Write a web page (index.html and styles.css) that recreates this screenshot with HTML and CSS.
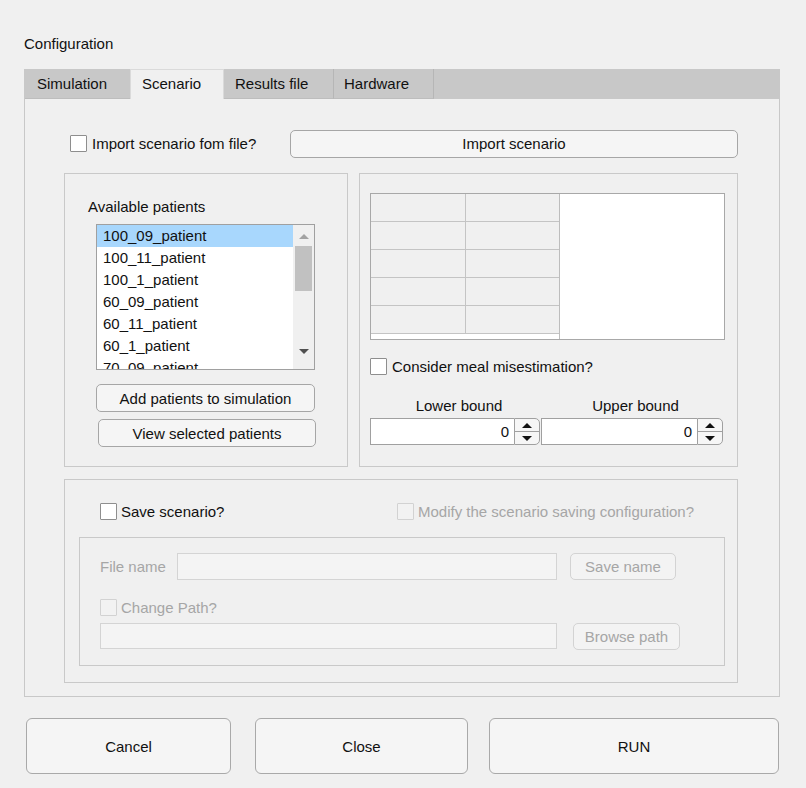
FILE: index.html
```html
<!DOCTYPE html>
<html>
<head>
<meta charset="utf-8">
<link rel="stylesheet" href="styles.css">
</head>
<body>
<div class="title">Configuration</div>
<div class="tabgroup">
  <div class="tabstrip">
    <div class="tab t1">Simulation</div>
    <div class="tab sel t2">Scenario</div>
    <div class="tab t3">Results file</div>
    <div class="tab t4">Hardware</div>
  </div>
  <div class="tabbody">
    <div class="import-row">
      <div class="check import-check"><span class="box"></span><span>Import scenario fom file?</span></div>
      <div class="btn import-btn">Import scenario</div>
    </div>
    <div class="mid-row">
      <div class="panel patients">
        <div class="lbl">Available patients</div>
        <div class="list">
          <div class="items">
            <div class="item selected">100_09_patient</div>
            <div class="item">100_11_patient</div>
            <div class="item">100_1_patient</div>
            <div class="item">60_09_patient</div>
            <div class="item">60_11_patient</div>
            <div class="item">60_1_patient</div>
            <div class="item">70_09_patient</div>
          </div>
          <div class="scroll">
            <div class="arr-up"></div>
            <div class="thumb"></div>
            <div class="arr-down"></div>
          </div>
        </div>
        <div class="btn add-btn">Add patients to simulation</div>
        <div class="btn view-btn">View selected patients</div>
      </div>
      <div class="panel meals">
        <div class="table">
          <div class="grid">
            <div class="cell"></div><div class="cell c2"></div>
            <div class="cell"></div><div class="cell c2"></div>
            <div class="cell"></div><div class="cell c2"></div>
            <div class="cell"></div><div class="cell c2"></div>
            <div class="cell"></div><div class="cell c2"></div>
          </div>
        </div>
        <div class="check consider-check"><span class="box"></span><span>Consider meal misestimation?</span></div>
        <div class="bound-labels">
          <div class="bl lower">Lower bound</div>
          <div class="bl upper">Upper bound</div>
        </div>
        <div class="spinners">
          <div class="spinner lower">
            <div class="spin-input">0</div>
            <div class="spin-arrows"><div class="sa"><span class="up"></span></div><div class="sa sa2"><span class="down"></span></div></div>
          </div>
          <div class="spinner upper">
            <div class="spin-input">0</div>
            <div class="spin-arrows"><div class="sa"><span class="up"></span></div><div class="sa sa2"><span class="down"></span></div></div>
          </div>
        </div>
      </div>
    </div>
    <div class="panel save-panel">
      <div class="save-row">
        <div class="check save-check"><span class="box"></span><span>Save scenario?</span></div>
        <div class="check disabled"><span class="box"></span><span>Modify the scenario saving configuration?</span></div>
      </div>
      <div class="panel inner">
        <div class="file-row">
          <div class="fn-label">File name</div>
          <div class="field fn-field"></div>
          <div class="btn dis save-name">Save name</div>
        </div>
        <div class="check disabled path-check"><span class="box"></span><span>Change Path?</span></div>
        <div class="path-row">
          <div class="field path-field"></div>
          <div class="btn dis browse">Browse path</div>
        </div>
      </div>
    </div>
  </div>
</div>
<div class="actions">
  <div class="btn big cancel">Cancel</div>
  <div class="btn big close">Close</div>
  <div class="btn big run">RUN</div>
</div>
</body>
</html>
```

FILE: styles.css
```css
* { box-sizing: border-box; }
html, body { margin: 0; padding: 0; }
body {
  background: #f0f0f0;
  font-family: "Liberation Sans", Arial, sans-serif;
  font-size: 15px;
  line-height: 17px;
  color: #111;
  width: 806px;
  height: 788px;
  overflow: hidden;
}
.title {
  height: 69px;
  padding: 35px 0 0 24px;
}
.tabgroup {
  margin-left: 24px;
  width: 756px;
  border: 1px solid #c8c8c8;
  border-top: none;
}
.tabstrip {
  display: flex;
  height: 30px;
  background: #c8c8c8;
}
.tab {
  height: 30px;
  padding: 6px 0 0 11px;
  border-right: 1px solid #b6b6b6;
  border-bottom: 1px solid #bdbdbd;
}
.t1 { width: 105px; padding-left: 12px; border-right: none; }
.t2 { width: 94px; }
.t3 { width: 110px; }
.t4 { width: 100px; padding-left: 10px; }
.tab.sel {
  background: #f0f0f0;
  border: 1px solid #dadada;
  border-bottom: none;
  padding-left: 11px;
  padding-top: 5px;
}
.tabbody {
  height: 597px;
  padding-left: 39px;
  padding-top: 31px;
}
.check {
  display: flex;
  align-items: center;
  height: 17px;
}
.box {
  width: 17px;
  height: 17px;
  border: 1px solid #8e8e8e;
  border-radius: 1px;
  background: #fff;
  margin-right: 5px;
  flex: none;
}
.check.disabled { color: #a6a6a6; }
.check.disabled .box { border-color: #d2d2d2; background: #f2f2f2; margin-right: 4px; }
.btn {
  display: flex;
  align-items: center;
  justify-content: center;
  background: #f5f5f5;
  border: 1px solid #a6a6a6;
  border-radius: 5px;
}
.btn.dis { color: #a6a6a6; border-color: #d3d3d3; background: #f3f3f3; }
.import-row {
  display: flex;
  align-items: center;
  height: 27px;
}
.import-check { width: 226px; padding-left: 6px; }
.import-btn { width: 448px; height: 28px; }
.mid-row {
  display: flex;
  gap: 11px;
  margin-top: 16px;
  height: 294px;
}
.panel { border: 1px solid #c9c9c9; }
.patients { width: 284px; height: 294px; padding: 24px 0 0 23px; }
.list {
  margin-top: 9px;
  margin-left: 8px;
  width: 219px;
  height: 146px;
  border: 1px solid #a0a0a0;
  background: #fff;
  display: flex;
  overflow: hidden;
}
.items { width: 196px; flex: none; }
.item { height: 22px; line-height: 22px; padding-left: 6px; white-space: nowrap; }
.item.selected { background: #a8d7fd; }
.scroll {
  width: 21px;
  flex: none;
  background: #f0f0f0;
  display: flex;
  flex-direction: column;
  align-items: center;
}
.arr-up {
  margin-top: 9px;
  width: 0; height: 0;
  border-left: 5px solid transparent;
  border-right: 5px solid transparent;
  border-bottom: 5px solid #a3a3a3;
}
.thumb {
  margin-top: 7px;
  width: 17px;
  height: 45px;
  background: #c1c1c1;
}
.arr-down {
  margin-top: 58px;
  width: 0; height: 0;
  border-left: 5px solid transparent;
  border-right: 5px solid transparent;
  border-top: 5px solid #505050;
}
.add-btn { margin-top: 14px; margin-left: 8px; width: 219px; height: 28px; }
.view-btn { margin-top: 7px; margin-left: 10px; width: 218px; height: 28px; }
.meals { width: 379px; height: 294px; padding: 19px 0 0 10px; }
.table {
  width: 355px;
  height: 147px;
  border: 1px solid #a8a8a8;
  background: #fff;
}
.grid {
  width: 189px;
  display: grid;
  grid-template-columns: 95px 93px;
  border-right: 1px solid #bdbdbd;
  height: 145px;
  align-content: start;
}
.cell {
  height: 28px;
  background: #f0f0f0;
  border-bottom: 1px solid #c4c4c4;
  border-right: 1px solid #c4c4c4;
}
.cell.c2 { border-right: none; }
.consider-check { margin-top: 18px; }
.bound-labels { display: flex; margin-top: 22px; }
.bl { text-align: center; padding-left: 7px; }
.bl.lower { width: 171px; }
.bl.upper { width: 182px; }
.spinners { display: flex; margin-top: 4px; }
.spinner { display: flex; height: 27px; }
.spinner.lower { width: 170px; margin-right: 1px; }
.spinner.upper { width: 182px; }
.spin-input {
  flex: 1;
  background: #fff;
  border: 1px solid #a0a0a0;
  border-right: none;
  text-align: right;
  padding-right: 5px;
  line-height: 25px;
}
.spin-arrows {
  width: 26px;
  border: 1px solid #a0a0a0;
  border-radius: 0 5px 5px 0;
  background: #f6f6f6;
  display: flex;
  flex-direction: column;
}
.sa { flex: 1; display: flex; align-items: center; justify-content: center; }
.sa2 { border-top: 1px solid #a0a0a0; }
.up {
  width: 0; height: 0;
  border-left: 5px solid transparent;
  border-right: 5px solid transparent;
  border-bottom: 5px solid #111;
}
.down {
  width: 0; height: 0;
  border-left: 5px solid transparent;
  border-right: 5px solid transparent;
  border-top: 5px solid #111;
}
.save-panel {
  margin-top: 12px;
  width: 674px;
  height: 204px;
  padding: 23px 0 0 14px;
}
.save-row { display: flex; padding-left: 21px; }
.save-check { width: 297px; }
.save-check .box { margin-right: 4px; }
.inner {
  margin-top: 17px;
  width: 646px;
  height: 129px;
  padding: 15px 0 0 20px;
}
.file-row { display: flex; align-items: flex-start; }
.fn-label { width: 77px; height: 27px; line-height: 27px; color: #a6a6a6; }
.field { background: #f4f4f4; border: 1px solid #d4d4d4; }
.fn-field { width: 380px; height: 27px; }
.save-name { margin-left: 13px; width: 106px; height: 27px; }
.path-check { margin-top: 19px; }
.path-row { display: flex; margin-top: 7px; }
.path-field { width: 457px; height: 26px; }
.browse { margin-left: 16px; width: 107px; height: 27px; }
.actions {
  display: flex;
  margin-top: 21px;
  padding-left: 26px;
}
.big { height: 56px; border-radius: 6px; border-color: #a9a9a9; }
.cancel { width: 205px; }
.close { width: 213px; margin-left: 24px; }
.run { width: 290px; margin-left: 21px; }
```
